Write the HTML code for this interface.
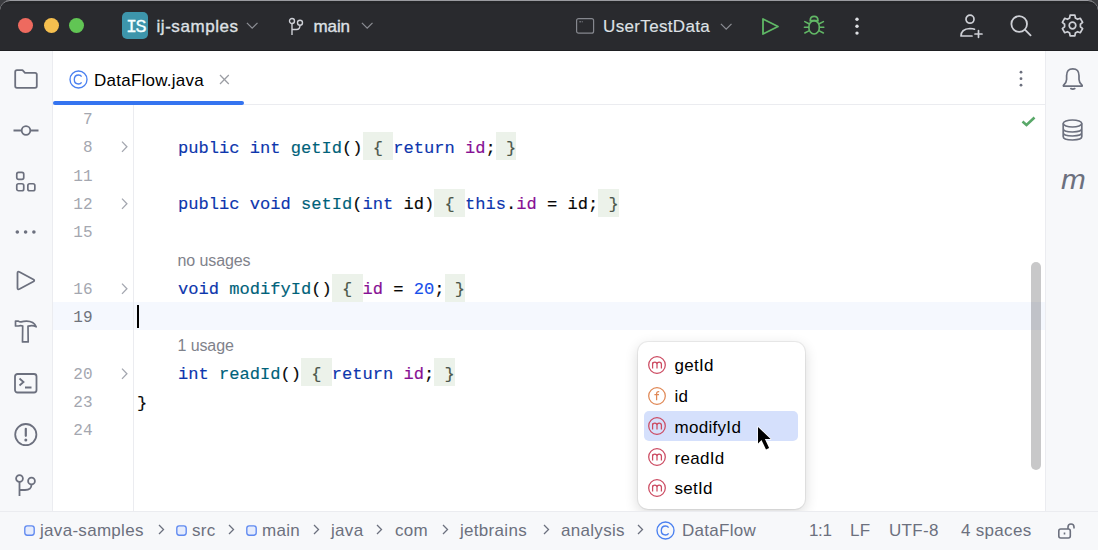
<!DOCTYPE html>
<html><head><meta charset="utf-8">
<style>
*{margin:0;padding:0;box-sizing:border-box}
html,body{width:1098px;height:550px;overflow:hidden;background:#3a3b3f}
body{font-family:"Liberation Sans",sans-serif;position:relative}
.a{position:absolute}
#win{position:absolute;left:0;top:0;width:1098px;height:550px;border-radius:10px 10px 0 0;overflow:hidden;background:#fff}
#topline{position:absolute;left:0;top:0;width:1098px;height:10px;border-radius:10px 10px 0 0;border-top:1px solid #9a9ba0;pointer-events:none}
#hdr{left:0;top:0;width:1098px;height:51px;background:#292a2e;border-bottom:1px solid #1e1f22}
.tl{width:15px;height:15px;border-radius:50%}
.ht{color:#dfe1e5;font-size:17px;line-height:20px;-webkit-text-stroke:0.35px #dfe1e5}
#lstripe{left:0;top:51px;width:53px;height:460px;background:#f7f8fa;border-right:1px solid #ebecf0}
#rstripe{left:1045px;top:51px;width:53px;height:460px;background:#f7f8fa;border-left:1px solid #ebecf0}
#tabs{left:53px;top:51px;width:992px;height:54px;background:#fff;border-bottom:1px solid #ebecf0}
#status{left:0;top:511px;width:1098px;height:39px;background:#f7f8fa;border-top:1px solid #ebecf0}
.st{color:#6c707e;font-size:17px;letter-spacing:0.3px;line-height:20px;top:9px}
.code{font-family:"Liberation Mono",monospace;font-size:17.08px;line-height:28.30px;white-space:pre;color:#080808;padding-top:2.9px;-webkit-text-stroke:0.15px currentColor}
.ln{font-family:"Liberation Mono",monospace;font-size:16px;line-height:28.30px;color:#a8adbd;text-align:right;width:40px;left:52.5px;padding-top:2.4px}
.kw{color:#0d36ad}.fn{color:#00627a}.fd{color:#871094}.nm{color:#1750eb}.br{color:#4b574b}
.fb{background:#ecf2ea;position:absolute;height:28px}
.hint{font-size:16px;color:#7f828b;line-height:28.3px;letter-spacing:-0.12px}
.pi{font-size:17px;color:#000;letter-spacing:0.3px;line-height:20px}
svg{position:absolute;overflow:visible}
</style></head><body>
<div id="win">

<div id="hdr" class="a"><div class="a" style="left:0;top:1px;width:1098px;height:3px;background:#252629"></div>
<div class="a tl" style="left:18px;top:18px;background:#ee6a5f"></div>
<div class="a tl" style="left:43.8px;top:18px;background:#f5bf4f"></div>
<div class="a tl" style="left:69px;top:18px;background:#61c554"></div>
<div class="a" style="left:122.3px;top:12.3px;width:26.2px;height:26.5px;border-radius:5px;background:#3d95ab;color:#f4ffff;font-family:'Liberation Mono',monospace;font-size:18.5px;line-height:26px;padding-top:2.5px;text-align:center;letter-spacing:-1.6px;-webkit-text-stroke:0.3px #f4ffff">IS</div>
<div class="a ht" style="left:156.5px;top:17px;letter-spacing:0.55px">ij-samples</div>
<svg style="left:246px;top:21px" width="12" height="8"><path d="M0.9 1.9 L6.2 7.1 L11.5 1.9" stroke="#8a8c92" stroke-width="1.3" fill="none"/></svg>
<svg style="left:288px;top:17px" width="16" height="19"><g stroke="#ced0d6" stroke-width="1.4" fill="none"><circle cx="4" cy="4" r="2.5"/><circle cx="12" cy="5.7" r="2.5"/><path d="M4 6.6 V18 M4 12.5 H8.5 Q12 12.5 12 8.2"/></g></svg>
<div class="a ht" style="left:313.5px;top:17px;letter-spacing:-0.1px">main</div>
<svg style="left:361px;top:21px" width="12" height="8"><path d="M0.9 1.9 L6.2 7.1 L11.5 1.9" stroke="#8a8c92" stroke-width="1.3" fill="none"/></svg>
<svg style="left:576px;top:18px" width="19" height="17"><rect x="0.6" y="0.6" width="17" height="14.6" rx="2" stroke="#85878e" stroke-width="1.2" fill="none"/><path d="M3.3 3.8 h1.8 M5.8 3.8 h1" stroke="#85878e" stroke-width="1"/></svg>
<div class="a ht" style="left:603px;top:17px;letter-spacing:0.35px;-webkit-text-stroke:0.15px #dfe1e5">UserTestData</div>
<svg style="left:720px;top:22px" width="12" height="8"><path d="M0.9 1.9 L6.2 7.1 L11.5 1.9" stroke="#8a8c92" stroke-width="1.3" fill="none"/></svg>
<svg style="left:761px;top:17px" width="19" height="19"><path d="M2 2 L17 9.5 L2 17 Z" stroke="#5fb865" stroke-width="1.8" fill="none" stroke-linejoin="round"/></svg>
<svg style="left:803px;top:15px" width="22" height="22"><g stroke="#62b866" stroke-width="1.6" fill="none" stroke-linecap="round"><path d="M7.2 5.6 Q7.2 1.4 11.1 1.4 Q15 1.4 15 5.6 Z"/><ellipse cx="11.1" cy="12.3" rx="5.3" ry="6.7"/><path d="M1.8 6.6 L5.9 8.7 M1.4 12.3 H5.8 M1.8 18 L5.9 15.9 M20.4 6.6 L16.3 8.7 M20.8 12.3 H16.4 M20.4 18 L16.3 15.9"/></g></svg>
<svg style="left:854px;top:17px" width="6" height="20"><g fill="#dfe1e5"><circle cx="3" cy="2.3" r="1.7"/><circle cx="3" cy="9.2" r="1.7"/><circle cx="3" cy="16.1" r="1.7"/></g></svg>
<svg style="left:959.5px;top:14px" width="24" height="24"><g stroke="#ced0d6" stroke-width="1.7" fill="none" stroke-linecap="round"><circle cx="10" cy="5.2" r="4"/><path d="M1 22 Q1 15 10 14.5 Q13 14.5 14.5 15.2 M1 22 H12 M18.5 16.5 V23.3 M15 20 H22"/></g></svg>
<svg style="left:1010px;top:15.3px" width="23" height="23"><g stroke="#ced0d6" stroke-width="1.8" fill="none" stroke-linecap="round"><circle cx="9.2" cy="9" r="7.8"/><path d="M14.9 14.7 L20.6 20.4"/></g></svg>
<svg style="left:1060.5px;top:14.2px" width="23" height="23"><g stroke="#ced0d6" stroke-width="1.7" fill="none" stroke-linejoin="round"><path d="M8.63 4.03 L9.12 1.17 L13.88 1.17 L14.37 4.03 L16.53 5.28 L19.25 4.27 L21.64 8.40 L19.40 10.25 L19.40 12.75 L21.64 14.60 L19.25 18.73 L16.53 17.72 L14.37 18.97 L13.88 21.83 L9.12 21.83 L8.63 18.97 L6.47 17.72 L3.75 18.73 L1.36 14.60 L3.60 12.75 L3.60 10.25 L1.36 8.40 L3.75 4.27 L6.47 5.28 Z"/><circle cx="11.5" cy="11.5" r="3.3"/></g></svg>
</div>
<div id="lstripe" class="a">
<svg style="left:14px;top:18px" width="24" height="20"><path d="M1.2 3 Q1.2 1.2 3 1.2 H8.5 L11 3.8 H21 Q22.8 3.8 22.8 5.6 V17 Q22.8 18.8 21 18.8 H3 Q1.2 18.8 1.2 17 Z" stroke="#6c707e" stroke-width="1.8" fill="none" stroke-linejoin="round"/></svg>
<svg style="left:13px;top:74px" width="26" height="12"><g stroke="#6c707e" stroke-width="1.8" fill="none"><circle cx="13" cy="5.5" r="4.3"/><path d="M0.5 5.5 H8.7 M17.3 5.5 H25.5"/></g></svg>
<svg style="left:15px;top:121px" width="22" height="22"><g stroke="#6c707e" stroke-width="1.7" fill="none"><rect x="1.75" y="0.35" width="7" height="7" rx="1.8"/><rect x="1.75" y="11.75" width="7" height="7" rx="1.8"/><rect x="12.85" y="11.75" width="7" height="7" rx="1.8"/></g></svg>
<svg style="left:15px;top:178.2px" width="22" height="6"><g fill="#6c707e"><circle cx="2.3" cy="3" r="1.8"/><circle cx="10.6" cy="3" r="1.8"/><circle cx="18.9" cy="3" r="1.8"/></g></svg>
<svg style="left:16px;top:219px" width="20" height="22"><path d="M1.5 3 Q1.5 1 3.5 2 L17.5 9.5 Q19 10.5 17.5 11.5 L3.5 19 Q1.5 20 1.5 18 Z" stroke="#6c707e" stroke-width="1.8" fill="none" stroke-linejoin="round"/></svg>
<svg style="left:14px;top:269px" width="24" height="24"><path d="M1.5 1.1 H4.4 Q5.6 2.2 7.2 1.9 Q9.5 1.2 12.5 1.2 Q19.8 1.2 22.2 6.8 Q19 4.8 14.3 6.1 L14 6.1 L14.2 21.9 H8.5 L8.7 6.1 Q6.8 5.1 4.4 6 H1.5 Z" stroke="#6c707e" stroke-width="1.7" fill="none" stroke-linejoin="round"/></svg>
<svg style="left:14px;top:321.5px" width="24" height="21"><g stroke="#6c707e" stroke-width="1.8" fill="none"><rect x="1" y="1" width="21.5" height="18.5" rx="2.5"/><path d="M5.5 5.5 L9.5 9 L5.5 12.5 M11 14.5 H17.5"/></g></svg>
<svg style="left:14px;top:372px" width="24" height="24"><g stroke="#6c707e" stroke-width="1.8" fill="none"><circle cx="11.8" cy="11.6" r="10.6"/><path d="M11.8 5.8 V12.8" stroke-width="2.2" stroke-linecap="round"/></g><circle cx="11.8" cy="16.9" r="1.5" fill="#6c707e"/></svg>
<svg style="left:15px;top:423px" width="22" height="23"><g stroke="#6c707e" stroke-width="1.8" fill="none"><circle cx="4.5" cy="4.5" r="3.4"/><circle cx="16.5" cy="7" r="3.4"/><path d="M4.5 8 V22 M4.5 16 H10 Q16.5 16 16.5 10.5"/></g></svg>
</div>
<div id="rstripe" class="a">
<svg style="left:16px;top:15.5px" width="22" height="23"><g stroke="#6c707e" stroke-width="1.7" fill="none" stroke-linejoin="round"><path d="M10.8 1.8 Q4.6 1.8 4.6 8.8 V12.6 Q4.6 15.6 1.4 18.4 Q1.2 19.2 2 19.2 H19.6 Q20.4 19.2 20.2 18.4 Q17 15.6 17 12.6 V8.8 Q17 1.8 10.8 1.8 Z"/><path d="M8.8 21.6 Q10.8 22.8 12.8 21.6" stroke-linecap="round"/></g></svg>
<svg style="left:16px;top:67.5px" width="22" height="23"><g stroke="#6c707e" stroke-width="1.7" fill="none"><ellipse cx="10.5" cy="4.5" rx="9.3" ry="3.5"/><path d="M1.2 4.5 V17.5 Q1.2 21 10.5 21 Q19.8 21 19.8 17.5 V4.5 M1.2 9.5 Q1.2 13 10.5 13 Q19.8 13 19.8 9.5 M1.2 13.5 Q1.2 17 10.5 17 Q19.8 17 19.8 13.5"/></g></svg>
<div class="a" style="left:14.5px;top:113.5px;font-family:'Liberation Sans';font-style:italic;font-size:27px;line-height:30px;color:#6c707e;transform:scaleX(1.1);transform-origin:0 0">m</div>
</div>
<div id="tabs" class="a">
<svg style="left:16px;top:19px" width="19" height="19"><g stroke="#4a80f0" stroke-width="1.35" fill="none"><circle cx="9.5" cy="9.5" r="8.5"/><path d="M12.6 6.6 Q11.6 5 9.6 5 Q5.3 5 5.3 9.5 Q5.3 14 9.6 14 Q11.6 14 12.6 12.4"/></g></svg>
<div class="a" style="left:41px;top:20px;font-size:17px;letter-spacing:0.25px;color:#000;line-height:20px">DataFlow.java</div>
<svg style="left:165.5px;top:22.6px" width="11" height="11"><path d="M1 1 L9.8 10 M9.8 1 L1 10" stroke="#9c9ea4" stroke-width="1.25"/></svg>
<div class="a" style="left:0;top:50px;width:191px;height:4px;border-radius:2px;background:#3574f0"></div>
<svg style="left:965px;top:18.7px" width="6" height="18"><g fill="#6c707e"><circle cx="3" cy="2.2" r="1.4"/><circle cx="3" cy="8.7" r="1.4"/><circle cx="3" cy="15.2" r="1.4"/></g></svg>
</div>
<div class="a" style="left:53px;top:301.80px;width:992px;height:28.30px;background:#f5f8fe"></div>
<div class="a" style="left:133px;top:105px;width:1px;height:406px;background:#ebecf0"></div>
<div class="fb" style="left:362.56px;top:132.00px;width:30.74px"></div>
<div class="fb" style="left:495.78px;top:132.00px;width:20.50px"></div>
<div class="fb" style="left:434.29px;top:188.60px;width:30.74px"></div>
<div class="fb" style="left:598.26px;top:188.60px;width:20.50px"></div>
<div class="fb" style="left:331.81px;top:273.50px;width:30.74px"></div>
<div class="fb" style="left:444.54px;top:273.50px;width:20.50px"></div>
<div class="fb" style="left:301.07px;top:358.40px;width:30.74px"></div>
<div class="fb" style="left:434.29px;top:358.40px;width:20.50px"></div>
<div class="a ln" style="top:103.70px;color:#a4a7b0">7</div>
<div class="a ln" style="top:132.00px;color:#a4a7b0">8</div>
<svg style="left:121px;top:141.20px" width="7" height="12"><path d="M1 0.6 L5.9 5.75 L1 10.9" stroke="#a4a7b0" stroke-width="1.3" fill="none"/></svg>
<div class="a code" style="left:137.10px;top:132.00px">    <span class="kw">public int</span> <span class="fn">getId</span>() <span class="br">{</span> <span class="kw">return</span> <span class="fd">id</span>; <span class="br">}</span></div>
<div class="a ln" style="top:160.30px;color:#a4a7b0">11</div>
<div class="a ln" style="top:188.60px;color:#a4a7b0">12</div>
<svg style="left:121px;top:197.80px" width="7" height="12"><path d="M1 0.6 L5.9 5.75 L1 10.9" stroke="#a4a7b0" stroke-width="1.3" fill="none"/></svg>
<div class="a code" style="left:137.10px;top:188.60px">    <span class="kw">public void</span> <span class="fn">setId</span>(<span class="kw">int</span> id) <span class="br">{</span> <span class="kw">this</span>.<span class="fd">id</span> = id; <span class="br">}</span></div>
<div class="a ln" style="top:216.90px;color:#a4a7b0">15</div>
<div class="a hint" style="left:177.6px;top:247.10px">no usages</div>
<div class="a ln" style="top:273.50px;color:#a4a7b0">16</div>
<svg style="left:121px;top:282.70px" width="7" height="12"><path d="M1 0.6 L5.9 5.75 L1 10.9" stroke="#a4a7b0" stroke-width="1.3" fill="none"/></svg>
<div class="a code" style="left:137.10px;top:273.50px">    <span class="kw">void</span> <span class="fn">modifyId</span>() <span class="br">{</span> <span class="fd">id</span> = <span class="nm">20</span>; <span class="br">}</span></div>
<div class="a ln" style="top:301.80px;color:#6f737c">19</div>
<div class="a hint" style="left:177.6px;top:332.00px">1 usage</div>
<div class="a ln" style="top:358.40px;color:#a4a7b0">20</div>
<svg style="left:121px;top:367.60px" width="7" height="12"><path d="M1 0.6 L5.9 5.75 L1 10.9" stroke="#a4a7b0" stroke-width="1.3" fill="none"/></svg>
<div class="a code" style="left:137.10px;top:358.40px">    <span class="kw">int</span> <span class="fn">readId</span>() <span class="br">{</span> <span class="kw">return</span> <span class="fd">id</span>; <span class="br">}</span></div>
<div class="a ln" style="top:386.70px;color:#a4a7b0">23</div>
<div class="a code" style="left:137.10px;top:386.70px">}</div>
<div class="a ln" style="top:415.00px;color:#a4a7b0">24</div>
<div class="a" style="left:136.5px;top:304.7px;width:2px;height:23px;background:#000"></div>
<div class="a" style="left:1031px;top:262px;width:10px;height:208px;border-radius:5px;background:rgba(0,0,5,0.215)"></div>
<svg style="left:1021px;top:116px" width="15" height="11"><path d="M1.5 5.5 L5.5 9 L13.5 1.5" stroke="#59a869" stroke-width="2.6" fill="none"/></svg>
<div id="popup" class="a" style="left:637.5px;top:342px;width:167px;height:167px;background:#fff;border-radius:10px;box-shadow:0 0 0 1px rgba(0,0,0,0.06),0 4px 14px rgba(0,0,0,0.16)">
<div class="a" style="left:6.7px;top:68.5px;width:154px;height:30.5px;border-radius:5px;background:#d5e0fc"></div>
<svg style="left:10.2px;top:13.7px" width="18" height="18"><circle cx="9" cy="9" r="8.3" stroke="#cc4b62" stroke-width="1.25" fill="none"/><path d="M4.6 12.6 V6.2 M4.6 8.2 Q4.6 6 6.8 6 Q9 6 9 8.2 V12.6 M9 8.2 Q9 6 11.2 6 Q13.4 6 13.4 8.2 V12.6" stroke="#cc4b62" stroke-width="1.25" fill="none"/></svg>
<div class="a pi" style="left:37px;top:14.2px">getId</div>
<svg style="left:10.2px;top:44.5px" width="18" height="18"><circle cx="9" cy="9" r="8.3" stroke="#e08855" stroke-width="1.25" fill="none"/><path d="M11.2 4.6 Q8.6 4.3 8.6 6.8 V13.2 M6.4 7.6 H11" stroke="#e08855" stroke-width="1.25" fill="none"/></svg>
<div class="a pi" style="left:37px;top:45.0px">id</div>
<svg style="left:10.2px;top:75.3px" width="18" height="18"><circle cx="9" cy="9" r="8.3" stroke="#cc4b62" stroke-width="1.25" fill="none"/><path d="M4.6 12.6 V6.2 M4.6 8.2 Q4.6 6 6.8 6 Q9 6 9 8.2 V12.6 M9 8.2 Q9 6 11.2 6 Q13.4 6 13.4 8.2 V12.6" stroke="#cc4b62" stroke-width="1.25" fill="none"/></svg>
<div class="a pi" style="left:37px;top:75.8px">modifyId</div>
<svg style="left:10.2px;top:106.1px" width="18" height="18"><circle cx="9" cy="9" r="8.3" stroke="#cc4b62" stroke-width="1.25" fill="none"/><path d="M4.6 12.6 V6.2 M4.6 8.2 Q4.6 6 6.8 6 Q9 6 9 8.2 V12.6 M9 8.2 Q9 6 11.2 6 Q13.4 6 13.4 8.2 V12.6" stroke="#cc4b62" stroke-width="1.25" fill="none"/></svg>
<div class="a pi" style="left:37px;top:106.6px">readId</div>
<svg style="left:10.2px;top:136.9px" width="18" height="18"><circle cx="9" cy="9" r="8.3" stroke="#cc4b62" stroke-width="1.25" fill="none"/><path d="M4.6 12.6 V6.2 M4.6 8.2 Q4.6 6 6.8 6 Q9 6 9 8.2 V12.6 M9 8.2 Q9 6 11.2 6 Q13.4 6 13.4 8.2 V12.6" stroke="#cc4b62" stroke-width="1.25" fill="none"/></svg>
<div class="a pi" style="left:37px;top:137.4px">setId</div>
</div>
<svg style="left:756px;top:425px" width="17" height="26"><path d="M2 2 L2 18.5 L5.5 15 L10 24.4 L13.1 23.1 L8.9 14 L14.6 14 Z" fill="#000" stroke="#fff" stroke-width="1.4" stroke-linejoin="round" paint-order="stroke"/></svg>
<div id="status" class="a">
<svg style="left:24px;top:13px" width="11" height="11"><rect x="0.8" y="0.8" width="9.4" height="9.4" rx="2.4" stroke="#5f89f0" stroke-width="1.35" fill="#e6ecfc"/></svg>
<div class="a st" style="left:40px">java-samples</div>
<svg style="left:158px;top:11.5px" width="7" height="11"><path d="M1 1 L5.5 5.5 L1 10" stroke="#6c707e" stroke-width="1.3" fill="none"/></svg>
<svg style="left:176px;top:13px" width="11" height="11"><rect x="0.8" y="0.8" width="9.4" height="9.4" rx="2.4" stroke="#5f89f0" stroke-width="1.35" fill="#e6ecfc"/></svg>
<div class="a st" style="left:192px">src</div>
<svg style="left:228px;top:11.5px" width="7" height="11"><path d="M1 1 L5.5 5.5 L1 10" stroke="#6c707e" stroke-width="1.3" fill="none"/></svg>
<svg style="left:246px;top:13px" width="11" height="11"><rect x="0.8" y="0.8" width="9.4" height="9.4" rx="2.4" stroke="#5f89f0" stroke-width="1.35" fill="#e6ecfc"/></svg>
<div class="a st" style="left:262px">main</div>
<svg style="left:313px;top:11.5px" width="7" height="11"><path d="M1 1 L5.5 5.5 L1 10" stroke="#6c707e" stroke-width="1.3" fill="none"/></svg>
<div class="a st" style="left:331px">java</div>
<svg style="left:376px;top:11.5px" width="7" height="11"><path d="M1 1 L5.5 5.5 L1 10" stroke="#6c707e" stroke-width="1.3" fill="none"/></svg>
<div class="a st" style="left:395px">com</div>
<svg style="left:442px;top:11.5px" width="7" height="11"><path d="M1 1 L5.5 5.5 L1 10" stroke="#6c707e" stroke-width="1.3" fill="none"/></svg>
<div class="a st" style="left:460px">jetbrains</div>
<svg style="left:543px;top:11.5px" width="7" height="11"><path d="M1 1 L5.5 5.5 L1 10" stroke="#6c707e" stroke-width="1.3" fill="none"/></svg>
<div class="a st" style="left:561px">analysis</div>
<svg style="left:637px;top:11.5px" width="7" height="11"><path d="M1 1 L5.5 5.5 L1 10" stroke="#6c707e" stroke-width="1.3" fill="none"/></svg>
<svg style="left:656px;top:8.8px" width="19" height="19"><g stroke="#4a80f0" stroke-width="1.35" fill="none"><circle cx="9.5" cy="9.5" r="8.5"/><path d="M12.6 6.6 Q11.6 5 9.6 5 Q5.3 5 5.3 9.5 Q5.3 14 9.6 14 Q11.6 14 12.6 12.4"/></g></svg>
<div class="a st" style="left:682px">DataFlow</div>
<div class="a st" style="left:809px;letter-spacing:-0.4px">1:1</div>
<div class="a st" style="left:850px">LF</div>
<div class="a st" style="left:889px">UTF-8</div>
<div class="a st" style="left:961px">4 spaces</div>
<svg style="left:1058px;top:11px" width="18" height="16"><g stroke="#6c707e" stroke-width="1.6" fill="none"><rect x="0.8" y="6" width="11.5" height="9" rx="2"/><path d="M10 6 V4 Q10 1 13 1 Q16 1 16 4 V5.5 M6.5 9.5 V11.5"/></g></svg>
</div>
<div id="topline"></div>
</div>
</body></html>
